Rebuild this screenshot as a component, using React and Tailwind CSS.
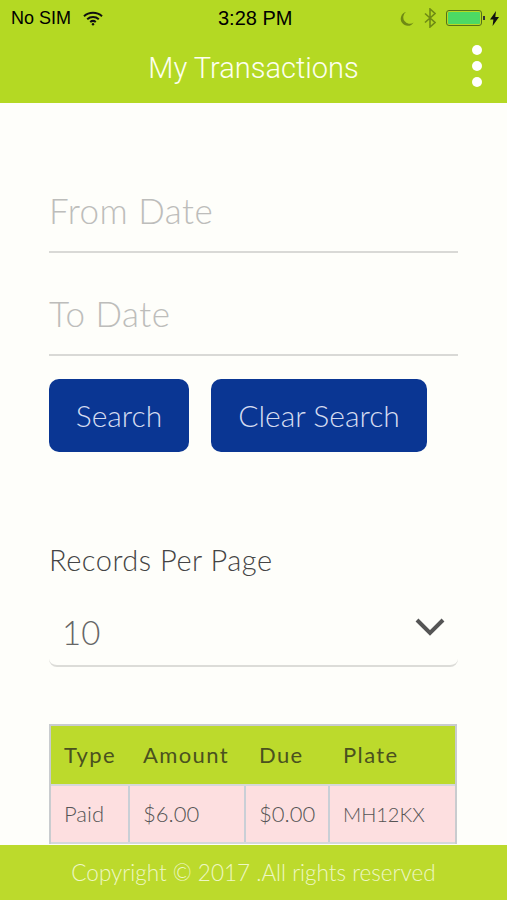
import React from 'react';

function StatusBar() {
  return (
    <div className="relative flex h-[36px] items-center justify-between pl-[11px] pr-[8px] text-black font-['Liberation_Sans',sans-serif]">
      <div className="flex items-center gap-[12px] text-[18px] leading-none">
        <span>No SIM</span>
        <svg width="20" height="15" viewBox="0 0 20 15" fill="none" stroke="#111" strokeWidth="2">
          <path d="M1 5.2C6 .6 14 .6 19 5.2" />
          <path d="M4.2 8.2c3.3-2.9 8.3-2.9 11.6 0" />
          <path d="M7.2 11c1.6-1.3 4-1.3 5.6 0" />
          <circle cx="10" cy="13.2" r="1.2" fill="#111" stroke="none" />
        </svg>
      </div>
      <span className="absolute left-[218px] top-[8px] text-[20px] leading-none font-medium">3:28 PM</span>
      <div className="flex items-center">
        <svg width="15" height="15" viewBox="0 0 15 15" fill="#6f8a14" className="mr-[10px]">
          <path d="M7 1a7 7 0 1 0 7.6 10.6A6.5 6.5 0 0 1 7 1z" />
        </svg>
        <svg width="12" height="20" viewBox="0 0 12 20" fill="none" stroke="#6f8a14" strokeWidth="1.6" className="mr-[10px]">
          <path d="M1 5.5l10 9-5 4.5V1l5 4.5-10 9" />
        </svg>
        <div className="h-[16px] w-[36px] rounded-[3px] border border-[#55701a] p-[1px]">
          <div className="h-full w-full rounded-[1px] bg-[#4cd964]" />
        </div>
        <div className="ml-[1px] mr-[5px] h-[4px] w-[2px] bg-[#333]" />
        <svg width="9" height="15" viewBox="0 0 9 15" fill="#111">
          <path d="M6 0L0 8.5h3.4L2.6 15 9 6H5.3z" />
        </svg>
      </div>
    </div>
  );
}

function Header() {
  return (
    <header className="h-[103px] shrink-0 bg-[#b4d923]">
      <StatusBar />
      <div className="relative flex h-[64px] items-center justify-center pt-[1px]">
        <h1 className="text-[29px] leading-none font-light text-[#fdfff0] font-['Roboto',sans-serif]">My Transactions</h1>
        <div className="absolute right-[25px] top-[9px] flex flex-col gap-[6px]">
          <div className="h-[10px] w-[10px] rounded-full bg-white" />
          <div className="h-[10px] w-[10px] rounded-full bg-white" />
          <div className="h-[10px] w-[10px] rounded-full bg-white" />
        </div>
      </div>
    </header>
  );
}

function DateField({ label }) {
  return (
    <div className="flex h-[72px] items-center border-b-2 border-[#d9d9d6] pb-[12px] text-[35px] leading-none font-light tracking-[0.5px] text-[#bdbdbb]">
      {label}
    </div>
  );
}

const cols = ['w-[79px]', 'w-[116px]', 'w-[84px]', 'flex-1'];
const heads = ['Type', 'Amount', 'Due', 'Plate'];
const cells = ['Paid', '$6.00', '$0.00', 'MH12KX'];

function Table() {
  return (
    <div className="mt-[57px] mr-[1px] border-2 border-b-0 border-[#c9cccf]">
      <div className="flex h-[58px] items-center bg-[#bcda2c] text-[22px] leading-none tracking-[1.4px] text-[#4a511f]">
        {heads.map((h, i) => (
          <div key={h} className={`${cols[i]} pl-[13px]`}>{h}</div>
        ))}
      </div>
      <div className="flex h-[60px] border-y-2 border-[#d5d8da] bg-[#fddfe0] text-[22px] leading-none font-light text-[#555]">
        {cells.map((c, i) => (
          <div key={c} className={`${cols[i]} flex items-center pl-[13px] ${i < 3 ? 'border-r-2 border-[#c9cfd6]' : 'text-[20px]'}`}>{c}</div>
        ))}
      </div>
    </div>
  );
}

export default function App() {
  return (
    <div className="flex h-[900px] w-[507px] flex-col overflow-hidden bg-[#fefefa] font-['Lato',sans-serif]">
      <Header />
      <main className="min-h-0 flex-1 overflow-hidden pl-[49px] pr-[49px]">
        <div className="pt-[78px]">
          <DateField label="From Date" />
          <div className="mt-[31px]">
            <DateField label="To Date" />
          </div>
        </div>
        <div className="mt-[23px] flex gap-[22px]">
          <button className="h-[73px] w-[140px] rounded-[10px] bg-[#0a3693] text-[30px] font-light text-[#d5dcf0]">Search</button>
          <button className="h-[73px] w-[216px] rounded-[10px] bg-[#0a3693] text-[30px] font-light text-[#d5dcf0]">Clear Search</button>
        </div>
        <div className="mt-[93px] text-[29px] leading-none font-light tracking-[0.5px] text-[#444]">Records Per Page</div>
        <div className="mt-[25px] flex h-[68px] items-center justify-between rounded-b-[8px] border-b-2 border-[#dcdcd8] pl-[13px] pr-[13px]">
          <span className="text-[33px] leading-none font-light text-[#666]">10</span>
          <svg width="30" height="18" viewBox="0 0 30 18" fill="none" stroke="#555" strokeWidth="4" className="mb-[10px]">
            <path d="M2 2l13 13L28 2" />
          </svg>
        </div>
        <Table />
      </main>
      <footer className="flex h-[55px] shrink-0 items-center justify-center bg-[#bcda2c] text-[22.5px] font-light text-[#eef7c4]">
        Copyright © 2017 .All rights reserved
      </footer>
    </div>
  );
}
